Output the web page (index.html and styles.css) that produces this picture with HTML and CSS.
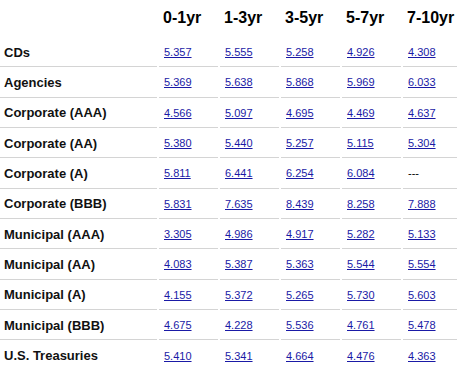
FILE: index.html
```html
<!DOCTYPE html>
<html>
<head>
<meta charset="utf-8">
<link rel="stylesheet" href="styles.css">
</head>
<body>
<table class="rates">
  <thead>
    <tr>
      <th class="label"></th>
      <th>0-1yr</th>
      <th>1-3yr</th>
      <th>3-5yr</th>
      <th>5-7yr</th>
      <th>7-10yr</th>
    </tr>
  </thead>
  <tbody>
    <tr><td class="label">CDs</td><td><a href="#">5.357</a></td><td><a href="#">5.555</a></td><td><a href="#">5.258</a></td><td><a href="#">4.926</a></td><td><a href="#">4.308</a></td></tr>
    <tr><td class="label">Agencies</td><td><a href="#">5.369</a></td><td><a href="#">5.638</a></td><td><a href="#">5.868</a></td><td><a href="#">5.969</a></td><td><a href="#">6.033</a></td></tr>
    <tr><td class="label">Corporate (AAA)</td><td><a href="#">4.566</a></td><td><a href="#">5.097</a></td><td><a href="#">4.695</a></td><td><a href="#">4.469</a></td><td><a href="#">4.637</a></td></tr>
    <tr><td class="label">Corporate (AA)</td><td><a href="#">5.380</a></td><td><a href="#">5.440</a></td><td><a href="#">5.257</a></td><td><a href="#">5.115</a></td><td><a href="#">5.304</a></td></tr>
    <tr><td class="label">Corporate (A)</td><td><a href="#">5.811</a></td><td><a href="#">6.441</a></td><td><a href="#">6.254</a></td><td><a href="#">6.084</a></td><td class="none">---</td></tr>
    <tr><td class="label">Corporate (BBB)</td><td><a href="#">5.831</a></td><td><a href="#">7.635</a></td><td><a href="#">8.439</a></td><td><a href="#">8.258</a></td><td><a href="#">7.888</a></td></tr>
    <tr><td class="label">Municipal (AAA)</td><td><a href="#">3.305</a></td><td><a href="#">4.986</a></td><td><a href="#">4.917</a></td><td><a href="#">5.282</a></td><td><a href="#">5.133</a></td></tr>
    <tr><td class="label">Municipal (AA)</td><td><a href="#">4.083</a></td><td><a href="#">5.387</a></td><td><a href="#">5.363</a></td><td><a href="#">5.544</a></td><td><a href="#">5.554</a></td></tr>
    <tr><td class="label">Municipal (A)</td><td><a href="#">4.155</a></td><td><a href="#">5.372</a></td><td><a href="#">5.265</a></td><td><a href="#">5.730</a></td><td><a href="#">5.603</a></td></tr>
    <tr><td class="label">Municipal (BBB)</td><td><a href="#">4.675</a></td><td><a href="#">4.228</a></td><td><a href="#">5.536</a></td><td><a href="#">4.761</a></td><td><a href="#">5.478</a></td></tr>
    <tr><td class="label">U.S. Treasuries</td><td><a href="#">5.410</a></td><td><a href="#">5.341</a></td><td><a href="#">4.664</a></td><td><a href="#">4.476</a></td><td><a href="#">4.363</a></td></tr>
  </tbody>
</table>
</body>
</html>
```
FILE: styles.css
```css
html, body {
  margin: 0;
  padding: 0;
  background: #fff;
}
.rates {
  border-collapse: separate;
  border-spacing: 2px 0;
  margin-left: -2px;
  table-layout: fixed;
  width: 461px;
  font-family: "Liberation Sans", Arial, sans-serif;
}
.rates th {
  font-size: 16px;
  font-weight: bold;
  color: #000;
  text-align: left;
  height: 37px;
  padding: 0 0 1px 4px;
  box-sizing: border-box;
  vertical-align: middle;
  width: 59px;
}
.rates th.label {
  width: 157px;
}
.rates td {
  height: 30.33px;
  box-sizing: border-box;
  padding: 1px 0 0 5px;
  border-bottom: 1px solid #d4d4d4;
  font-size: 11px;
  vertical-align: middle;
}
.rates tbody tr:last-child td {
  border-bottom: none;
}
.rates td.label {
  font-size: 13px;
  font-weight: bold;
  color: #111;
  padding-left: 4px;
}
.rates a {
  color: #1a1aa6;
  text-decoration: underline;
}
.rates td.none {
  color: #000;
}
```
